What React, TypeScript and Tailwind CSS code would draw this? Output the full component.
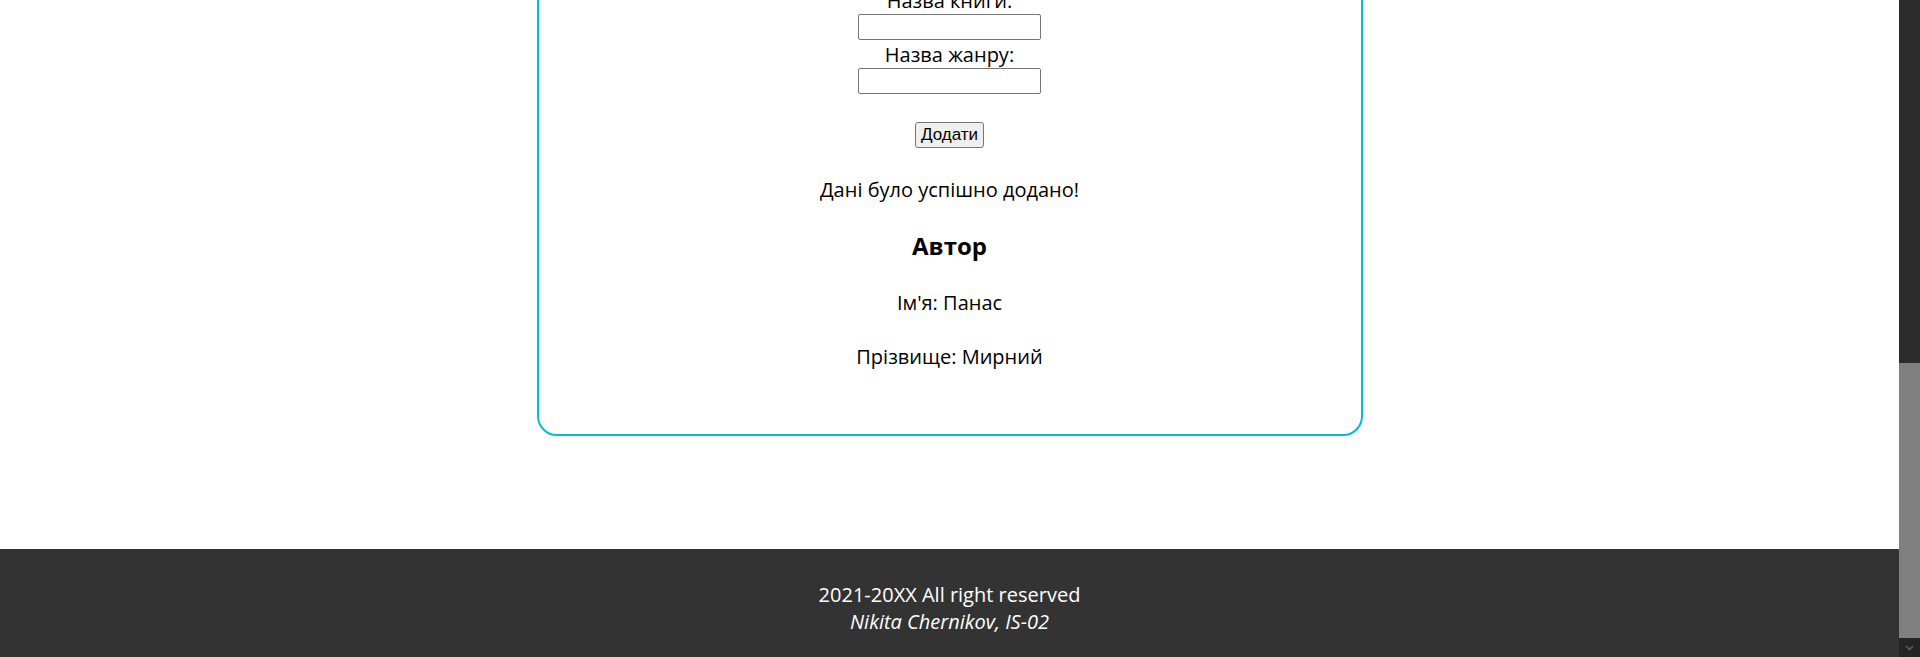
import React from "react";

export default function App() {
  return (
    <div className="flex h-[657px] w-full overflow-hidden bg-white" style={{ fontFamily: '"Open Sans", "Noto Sans", sans-serif' }}>
      <div className="flex min-w-0 flex-1 flex-col">
        <main className="flex h-[549px] flex-col items-center justify-end overflow-hidden pb-[113px]">
          <div className="flex w-[826px] shrink-0 flex-col items-center rounded-[20px] border-2 border-[#00bcd4] px-6 pb-[64px] pt-[40px] text-center text-[20px] text-black">
            <label className="block h-[26px] leading-[26px]">Назва книги:</label>
            <input type="text" className="mb-[2px] h-[26px] w-[183px] rounded-[2px] border border-[#767676] bg-white px-1 text-[13px] outline-none" />
            <label className="block h-[26px] leading-[26px]">Назва жанру:</label>
            <input type="text" className="h-[26px] w-[183px] rounded-[2px] border border-[#767676] bg-white px-1 text-[13px] outline-none" />
            <button
              type="button"
              className="mt-[28px] h-[26px] rounded-[3px] border border-[#767676] bg-[#efefef] px-[5px] text-[17px] leading-[20px] text-black"
              style={{ fontFamily: '"Liberation Sans", Arial, sans-serif' }}
            >
              Додати
            </button>
            <p className="mt-[29px] h-[26px] leading-[26px]">Дані було успішно додано!</p>
            <h2 className="mt-[28px] h-[30px] text-[24px] font-bold leading-[30px]">Автор</h2>
            <p className="mt-[29px] h-[26px] leading-[26px]">Ім'я: Панас</p>
            <p className="mt-[28px] h-[26px] leading-[26px]">Прізвище: Мирний</p>
          </div>
        </main>
        <footer className="flex h-[108px] flex-col items-center bg-[#333333] pt-[32px] text-[20px] font-medium leading-[27px] text-white">
          <p>2021-20XX All right reserved</p>
          <p className="italic">Nikita Chernikov, IS-02</p>
        </footer>
      </div>
      <div className="flex w-[21px] shrink-0 flex-col bg-[#2c2c2c]">
        <div className="h-[363px]" />
        <div className="h-[275px] bg-[#808080]" />
        <div className="flex h-[19px] items-center justify-center bg-[#242424]">
          <svg width="9" height="6" viewBox="0 0 9 6">
            <path d="M1 1 L4.5 4.5 L8 1" fill="none" stroke="#5c5c5c" strokeWidth="1.6" />
          </svg>
        </div>
      </div>
    </div>
  );
}
